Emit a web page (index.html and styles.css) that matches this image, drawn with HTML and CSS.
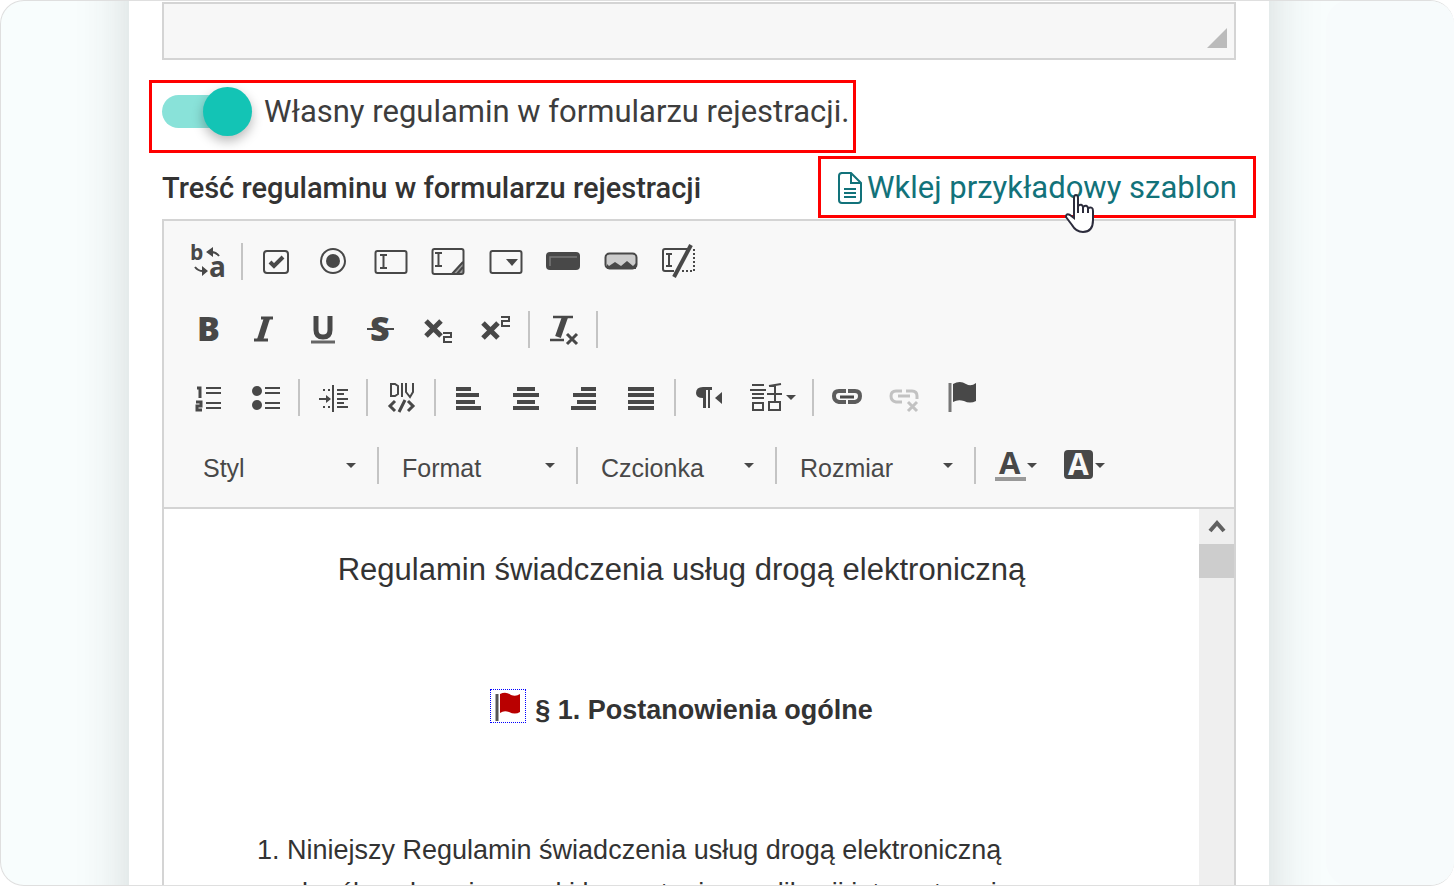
FILE: index.html
```html
<!DOCTYPE html>
<html lang="pl">
<head>
<meta charset="utf-8">
<title>Regulamin</title>
<link rel="stylesheet" href="styles.css">
</head>
<body>
<div class="frame">
  <main class="card">
    <div class="notes">
      <textarea class="notes-input" aria-label="Opis"></textarea>
      <svg class="grip" viewBox="0 0 20 20" aria-hidden="true"><path d="M0 20L20 0V20Z"/></svg>
    </div>

    <label class="toggle-row marked">
      <input class="switch" type="checkbox" role="switch" checked>
      <span>Własny regulamin w formularzu rejestracji.</span>
    </label>

    <div class="field-head">
      <h2 class="field-title">Treść regulaminu w formularzu rejestracji</h2>
      <a class="template-link marked" href="#">
        <svg class="doc-icon" viewBox="0 0 26 34" aria-hidden="true"><path d="M4 2H14L24 12V29Q24 32 21 32H5Q2 32 2 29V5Q2 2 5 2M14 2V12H24M7 18H19M7 22H19M7 26H19"/></svg>
        <span>Wklej przykładowy szablon</span>
        <svg class="cursor" viewBox="0 0 32 40" aria-hidden="true"><path d="M10 20V4Q10 1 12 1Q14 1 14 4V12Q18 9 19 13Q23 10 24 14Q29 12 29 17V26Q29 38 19 38Q12 38 8 31L2 23Q2 19 6 21L10 24Z"/><path d="M14 12V19M19 13V19M24 14V19"/></svg>
      </a>
    </div>

    <section class="editor">
      <div class="toolbar" role="toolbar" aria-label="Edytor">
        <div class="tool-row">
          <div class="group g1">
            <button class="tool" type="button" aria-label="Znajdź i zamień"><svg class="ico" viewBox="-18 -18 36 36"><text class="svg-h" x="-18" y="-1" font-size="21">b</text><text class="svg-h" x="1" y="16" font-size="28">a</text><path class="s2" d="M11-5Q8-9 3-9M-13 6Q-10 10-5 10"/><path class="f" d="M-2-9L5-14V-4ZM0 10L-6 5V15Z"/></svg></button>
          </div>
          <span class="sep"></span>
          <div class="group g8">
            <button class="tool" type="button" aria-label="Pole wyboru"><svg class="ico" viewBox="-18 -18 36 36"><rect class="s2" x="-12" y="-10" width="24" height="22" rx="3"/><path class="s4" d="M-6 1L-2 5L7-4"/></svg></button>
            <button class="tool" type="button" aria-label="Przycisk opcji"><svg class="ico" viewBox="-18 -18 36 36"><circle class="s2" r="12"/><circle class="f" r="7"/></svg></button>
            <button class="tool" type="button" aria-label="Pole tekstowe"><svg class="ico" viewBox="-18 -18 36 36"><rect class="s2" x="-15.500" y="-10" width="31" height="22" rx="2"/><path class="s2" d="M-11-6H-4M-7.500-6V7M-11 7H-4"/></svg></button>
            <button class="tool" type="button" aria-label="Obszar tekstowy"><svg class="ico" viewBox="-18 -18 36 36"><rect class="s2" x="-15.500" y="-12" width="31" height="25" rx="2"/><path class="s2" d="M-13-8H-6M-9.500-8V5M-13 5H-6M4 13L15 1M9 13L15 6"/><path class="f" opacity=".5" d="M3 13L15 0V13Z"/></svg></button>
            <button class="tool" type="button" aria-label="Lista wyboru"><svg class="ico" viewBox="-18 -18 36 36"><rect class="s2" x="-15.500" y="-10" width="31" height="22" rx="2"/><path class="f" d="M0-2H12L6 5Z"/></svg></button>
            <button class="tool" type="button" aria-label="Przycisk"><svg class="ico" viewBox="-18 -18 36 36"><rect class="f" x="-17" y="-9" width="34" height="18" rx="4"/><path d="M-13 5V-4H14" fill="none" stroke="#777" stroke-width="1.500"/></svg></button>
            <button class="tool" type="button" aria-label="Przycisk graficzny"><svg class="ico" viewBox="-18 -18 36 36"><rect x="-15.500" y="-7.500" width="31" height="15" rx="4" fill="#ccc" stroke="#484848" stroke-width="2"/><path class="f" d="M-14 3L-12 5L-6 1L0 5L6 0L12 5L15 2V8H-14Z"/></svg></button>
            <button class="tool" type="button" aria-label="Pole ukryte"><svg class="ico" viewBox="-18 -18 36 36"><path class="s2" d="M10-12H-13Q-15-12-15-10V8Q-15 10-13 10H-4M-12-7H-6M-9-7V5M-12 5H-6"/><path class="s2" stroke-dasharray="2 2" d="M16-12V10H4"/><path class="s4" d="M13-16L-4 16"/></svg></button>
          </div>
        </div>

        <div class="tool-row">
          <div class="group g6">
            <button class="tool" type="button" aria-label="Pogrubienie"><svg class="ico" viewBox="-18 -18 36 36"><text class="svg-h bold" x="-11" y="12" font-size="34">B</text></svg></button>
            <button class="tool" type="button" aria-label="Kursywa"><svg class="ico" viewBox="-18 -18 36 36"><path class="s3" d="M-4-11H8M-11 11H3"/><path d="M2-11L-5 11" stroke="#484848" stroke-width="6"/></svg></button>
            <button class="tool" type="button" aria-label="Podkreślenie"><svg class="ico" viewBox="-18 -18 36 36"><path d="M-7-13V1Q-7 8 0 8T7 1V-13" fill="none" stroke="#484848" stroke-width="5"/><path d="M-12 13H12" stroke="#666" stroke-width="3"/></svg></button>
            <button class="tool" type="button" aria-label="Przekreślenie"><svg class="ico" viewBox="-18 -18 36 36"><text class="svg-h bold" x="-10" y="12" font-size="34">S</text><path class="s2" d="M-13 0H14"/></svg></button>
            <button class="tool" type="button" aria-label="Indeks dolny"><svg class="ico" viewBox="-18 -18 36 36"><path d="M-12-8L3 7M3-8L-12 7" stroke="#484848" stroke-width="5"/><path class="s2" d="M5 4H13V8H6V13H14"/></svg></button>
            <button class="tool" type="button" aria-label="Indeks górny"><svg class="ico" viewBox="-18 -18 36 36"><path d="M-12-6L3 9M3-6L-12 9" stroke="#484848" stroke-width="5"/><path class="s2" d="M6-12H14V-8H7V-3H15"/></svg></button>
          </div>
          <span class="sep"></span>
          <div class="group g1">
            <button class="tool" type="button" aria-label="Usuń formatowanie"><svg class="ico" viewBox="-18 -18 36 36"><path d="M-10-12H10M-13 11H1" stroke="#484848" stroke-width="2.500"/><path d="M2-12L-5 8" stroke="#484848" stroke-width="6"/><path class="s3" d="M4 5L14 15M14 5L4 15"/></svg></button>
          </div>
          <span class="sep"></span>
        </div>

        <div class="tool-row">
          <div class="group g2">
            <button class="tool" type="button" aria-label="Lista numerowana"><svg class="ico" viewBox="-18 -18 36 36"><path class="s2" d="M-2-9H13M-2-4H13M-2 6H13M-2 11H13"/><path class="s3" d="M-11-9H-8V1M-12 5H-7V9H-11V13H-6"/></svg></button>
            <button class="tool" type="button" aria-label="Lista wypunktowana"><svg class="ico" viewBox="-18 -18 36 36"><path class="s2" d="M0-9H15M0-4H15M0 6H15M0 11H15"/><circle class="f" cx="-8" cy="-6" r="5"/><circle class="f" cx="-8" cy="8" r="5"/></svg></button>
          </div>
          <span class="sep"></span>
          <div class="group g1">
            <button class="tool" type="button" aria-label="Wcięcie"><svg class="ico" viewBox="-18 -18 36 36"><path class="s2" d="M0-12V15M4-7H15M4-3H11M4 2H15M4 6H11M4 10H15M-14 2H-3"/><path class="s2" stroke-dasharray="2 3" d="M-10-7H-1M-10 10H-1"/><path class="f" d="M-7-2L-2 2L-7 6Z"/></svg></button>
          </div>
          <span class="sep"></span>
          <div class="group g1">
            <button class="tool" type="button" aria-label="Kontener DIV"><svg class="ico" viewBox="-18 -18 36 36"><path class="s2" d="M-10-13V-1H-6L-3-3V-11L-6-13ZM1-14V0M5-14V-5L9 0L12-5V-14"/><path class="s3" d="M-6 4L-11 9L-6 14M7 4L12 9L7 14M4 3L-2 15"/></svg></button>
          </div>
          <span class="sep"></span>
          <div class="group g4">
            <button class="tool" type="button" aria-label="Do lewej"><svg class="ico" viewBox="-18 -18 36 36"><path class="s4" d="M-13-8H2M-13-2H10M-13 5H6M-13 11H12"/></svg></button>
            <button class="tool" type="button" aria-label="Do środka"><svg class="ico" viewBox="-18 -18 36 36"><path class="s4" d="M-9-8H9M-13-2H13M-9 5H9M-13 11H13"/></svg></button>
            <button class="tool" type="button" aria-label="Do prawej"><svg class="ico" viewBox="-18 -18 36 36"><path class="s4" d="M-3-8H12M-11-2H12M-7 5H12M-13 11H12"/></svg></button>
            <button class="tool" type="button" aria-label="Wyjustuj"><svg class="ico" viewBox="-18 -18 36 36"><path class="s4" d="M-13-8H13M-13-2H13M-13 5H13M-13 11H13"/></svg></button>
          </div>
          <span class="sep"></span>
          <div class="group g1">
            <button class="tool" type="button" aria-label="Kierunek tekstu"><svg class="ico" viewBox="-18 -18 36 36"><path class="f" d="M3-10V-7H1V11H-1V-7H-3V11H-6V1Q-13 1-13-4Q-13-10-6-10Z"/><path class="f" d="M13-5V7L6 1Z"/></svg></button>
          </div>
          <button class="tool tool-menu" type="button" aria-label="Język"><svg class="ico" viewBox="-18 -18 36 36"><path class="s2" d="M-16-12H-4M-18-7H-2M-16-3H-4M-16 1H-4M-15 6H-5V13H-15ZM13-13L1-11M7-12V5M-1-3H14M1 5H12V13H1Z"/></svg><svg class="arrow" viewBox="0 0 10 5"><path d="M0 0H10L5 5Z"/></svg></button>
          <span class="sep"></span>
          <div class="group g3">
            <button class="tool" type="button" aria-label="Odnośnik"><svg class="ico" viewBox="-18 -18 36 36"><path d="M-1-6H-8Q-13-6-13-1T-8 5H-1M1-6H8Q13-6 13-1T8 5H1" fill="none" stroke="#5c5c5c" stroke-width="4"/><path class="s3" d="M-7 0H7"/></svg></button>
            <button class="tool" type="button" aria-label="Usuń odnośnik" disabled><svg class="ico" viewBox="-18 -18 36 36"><path class="s3" d="M-2-6H-8Q-13-6-13-1T-8 5H-2M2-6H8Q13-6 13-1V2M-6-1H6M4 5L13 14M13 5L4 14"/></svg></button>
            <button class="tool" type="button" aria-label="Kotwica"><svg class="ico" viewBox="-18 -18 36 36"><path d="M-12-14V15" stroke="#777" stroke-width="3"/><path class="f" d="M-9-13Q-2-17 4-13Q9-10 14-14V4Q8 7 2 4Q-4 2-9 5Z"/></svg></button>
          </div>
        </div>

        <div class="tool-row combos">
          <label class="combo"><select aria-label="Styl"><option>Styl</option></select><svg class="arrow" viewBox="0 0 10 5"><path d="M0 0H10L5 5Z"/></svg></label>
          <span class="sep"></span>
          <label class="combo"><select aria-label="Format"><option>Format</option></select><svg class="arrow" viewBox="0 0 10 5"><path d="M0 0H10L5 5Z"/></svg></label>
          <span class="sep"></span>
          <label class="combo"><select aria-label="Czcionka"><option>Czcionka</option></select><svg class="arrow" viewBox="0 0 10 5"><path d="M0 0H10L5 5Z"/></svg></label>
          <span class="sep"></span>
          <label class="combo"><select aria-label="Rozmiar"><option>Rozmiar</option></select><svg class="arrow" viewBox="0 0 10 5"><path d="M0 0H10L5 5Z"/></svg></label>
          <span class="sep"></span>
          <button class="tool tool-menu" type="button" aria-label="Kolor tekstu"><svg class="ico" viewBox="-18 -18 36 36"><text class="svg-h" x="-10" y="9" font-size="31">A</text><path d="M-14 14H17" stroke="#999" stroke-width="4"/></svg><svg class="arrow" viewBox="0 0 10 5"><path d="M0 0H10L5 5Z"/></svg></button>
          <button class="tool tool-menu" type="button" aria-label="Kolor tła"><svg class="ico" viewBox="-18 -18 36 36"><rect class="f" x="-13" y="-15" width="29" height="29" rx="4"/><text class="svg-h white" x="-9" y="10" font-size="30">A</text></svg><svg class="arrow" viewBox="0 0 10 5"><path d="M0 0H10L5 5Z"/></svg></button>
        </div>
      </div>

      <div class="body">
        <article class="doc">
          <p class="doc-title">Regulamin świadczenia usług drogą elektroniczną</p>
          <h3 class="doc-heading">
            <span class="anchor"><svg viewBox="0 0 34 32" aria-hidden="true"><path d="M6 4V31" stroke="#555" stroke-width="3"/><path d="M9 4Q15 1 20 5Q25 7 29 4V22Q24 25 18 22Q13 20 9 23Z" fill="#b90000"/></svg></span>
            § 1. Postanowienia ogólne
          </h3>
          <ol class="doc-list"><li>Niniejszy Regulamin świadczenia usług drogą elektroniczną określa zakres i warunki korzystania z aplikacji internetowej</li></ol>
        </article>
        <div class="scroll">
          <button class="scroll-up" type="button" aria-label="Przewiń w górę"><svg viewBox="0 0 18 14"><path d="M2 12L9 4L16 12"/></svg></button>
          <div class="scroll-thumb"></div>
        </div>
      </div>
    </section>
  </main>
</div>
</body>
</html>
```
FILE: styles.css
```css
* { box-sizing: border-box; }

body {
  margin: 0;
  background: #fff;
  color: #3d3d3d;
  font-family: Roboto, sans-serif;
}

.frame {
  position: relative;
  display: flex;
  height: 100vh;
  padding: 0 185px 0 128px;
  overflow: hidden;
  border: 1px solid #dfdfdf;
  border-right: 0;
  border-radius: 24px;
  background: #f8fdfd;
}

.frame::after {
  content: "";
  position: absolute;
  top: -1px;
  right: 0;
  bottom: -1px;
  width: 128px;
  border-radius: 24px;
  background: #f7fbfc;
}

/* The sheet runs past the frame at both ends so its side shadow stays even. */
.card {
  display: flex;
  flex: 1;
  flex-direction: column;
  min-width: 0;
  margin: -60px 0;
  padding: 61px 33px 0;
  background: #fff;
  box-shadow: 0 0 50px rgba(45, 50, 50, .18);
}

.notes { position: relative; height: 58px; }

.notes-input {
  display: block;
  width: 100%;
  height: 100%;
  border: 2px solid #d4d4d4;
  background: #f7f7f7;
  resize: none;
}

.grip {
  position: absolute;
  right: 9px;
  bottom: 12px;
  width: 20px;
  height: 20px;
  fill: #bbb;
}

.marked { border: 3px solid #f00; }

.toggle-row {
  display: flex;
  align-self: flex-start;
  align-items: center;
  gap: 12px;
  margin: 20px 0 3px -13px;
  padding: 4px 4px 14px 10px;
  font-size: 31px;
  line-height: 49px;
  white-space: nowrap;
}

.switch {
  display: flex;
  align-items: center;
  justify-content: flex-end;
  width: 90px;
  height: 49px;
  margin: 0;
  appearance: none;
}

.switch::before {
  content: "";
  width: 66px;
  height: 33px;
  margin-right: -25px;
  border-radius: 17px 0 0 17px;
  background: #89e2d9;
}

.switch::after {
  content: "";
  width: 49px;
  height: 49px;
  border-radius: 50%;
  background: #13c4b5;
  box-shadow: 0 5px 12px rgba(0, 0, 0, .28);
}

.field-head {
  display: flex;
  align-items: center;
  justify-content: space-between;
  margin-right: -20px;
  margin-bottom: 1px;
  white-space: nowrap;
}

.field-title {
  margin: 0;
  padding-top: 2px;
  color: #333;
  font-size: 29px;
  font-weight: 500;
  line-height: 40px;
}

.template-link {
  position: relative;
  display: flex;
  align-items: center;
  gap: 4px;
  height: 62px;
  padding: 2px 16px 0;
  color: #12727a;
  font-size: 31px;
  line-height: 40px;
  text-decoration: none;
}

.doc-icon {
  width: 26px;
  height: 34px;
  fill: none;
  stroke: currentColor;
  stroke-width: 2;
}

.cursor {
  position: absolute;
  z-index: 1;
  right: 157px;
  bottom: -19px;
  width: 32px;
  height: 40px;
  fill: #fff;
  stroke: #2c2c3c;
  stroke-width: 2;
}

.editor {
  display: flex;
  flex: 1;
  flex-direction: column;
  min-height: 0;
  border: 2px solid #d4d4d4;
  border-bottom: 0;
}

.toolbar {
  padding: 6px 15px 8px;
  border-bottom: 2px solid #d4d4d4;
  background: #f8f8f8;
}

.tool-row { display: flex; align-items: center; height: 68px; }
.combos { padding-left: 5px; }

.group { display: grid; grid-auto-flow: column; grid-auto-columns: 1fr; }
.g1 { width: 58px; }
.g2 { width: 115px; }
.g3 { width: 173px; }
.g4 { width: 230px; }
.g6 { width: 345px; }
.g8 { width: 460px; }

.tool {
  display: flex;
  align-items: center;
  justify-content: center;
  height: 58px;
  padding: 0;
  border: 0;
  background: none;
}

.tool:disabled { opacity: .3; }

.tool-menu { width: 68px; }
.group + .tool-menu { width: 70px; }

.sep {
  width: 2px;
  height: 37px;
  margin: 0 4px;
  background: #c4c4c4;
}

.ico { flex: none; width: 36px; height: 36px; overflow: visible; }
.f { fill: #484848; }
.s2, .s3, .s4 { fill: none; stroke: #484848; }
.s2 { stroke-width: 2; }
.s3 { stroke-width: 3; }
.s4 { stroke-width: 4; }
.svg-h { fill: #484848; font-family: "Open Sans", sans-serif; font-weight: 700; }
.bold { font-weight: 800; }
.white { fill: #f8f8f8; }

.arrow { flex: none; width: 10px; height: 5px; fill: #484848; }

.combo {
  display: grid;
  align-items: center;
  width: 189px;
}

.combo > * { grid-area: 1 / 1; }
.combo > .arrow { justify-self: end; margin-right: 17px; pointer-events: none; }

.combo select {
  width: 100%;
  height: 44px;
  padding: 6px 30px 0 19px;
  appearance: none;
  border: 0;
  background: none;
  color: #484848;
  font-family: "Liberation Sans", sans-serif;
  font-size: 25px;
}

.body { display: flex; flex: 1; min-height: 0; background: #fff; }

.doc {
  flex: 1;
  padding: 36px 94px 0;
  overflow: hidden;
  color: #333;
  font-family: "Liberation Sans", sans-serif;
  font-size: 27px;
  line-height: 43px;
}

.doc-title { margin: 0 0 94px; font-size: 31px; line-height: 50px; text-align: center; }

.doc-heading {
  display: flex;
  align-items: flex-start;
  justify-content: center;
  gap: 9px;
  margin: 0 0 97px;
  font-size: 27px;
}

.anchor { width: 36px; height: 34px; border: 1px dotted #00f; }
.anchor svg { display: block; width: 34px; height: 32px; }

.doc-list { margin: 0; padding: 0 80px 0 29px; }

.scroll { width: 35px; background: #efefef; }

.scroll-up {
  display: grid;
  place-items: center;
  width: 35px;
  height: 35px;
  padding: 0 0 2px;
  border: 0;
  background: none;
}

.scroll-up svg { width: 18px; height: 14px; fill: none; stroke: #606060; stroke-width: 4; }
.scroll-thumb { height: 34px; background: #cdcdcd; }
```
